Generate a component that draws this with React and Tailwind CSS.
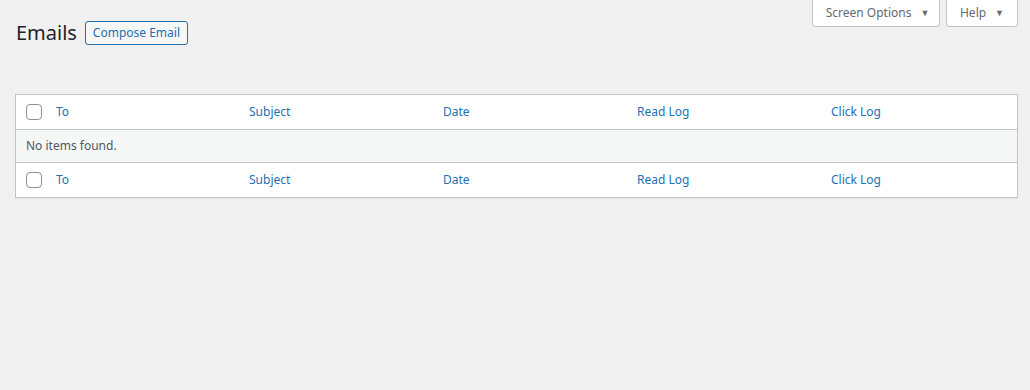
export default function App() {
    const columns = ['Subject', 'Date', 'Read Log', 'Click Log'];

    const headerRow = (key) => (
        <div key={key} className="flex h-[34px] items-center bg-white">
            <div className="flex w-[32px] shrink-0 justify-end pr-[6px]">
                <span className="block h-[16px] w-[16px] rounded-[4px] border border-[#8c8f94] bg-white" />
            </div>
            <div className="w-[194px] shrink-0 pl-[8px] text-[12px] text-[#2271b1]">To</div>
            {columns.map((c) => (
                <div key={c} className="w-[194px] shrink-0 pl-[7px] text-[12px] text-[#2271b1]">{c}</div>
            ))}
        </div>
    );

    return (
        <div
            className="min-h-[390px] w-full bg-[#f0f0f1] text-[#3c434a]"
            style={{ fontFamily: '"Noto Sans", "Open Sans", sans-serif' }}
        >
            {/* Screen meta tabs */}
            <div className="flex justify-end gap-[6px] pr-[12px]">
                <button className="flex h-[27px] w-[128px] items-center justify-center gap-[9px] rounded-b-[4px] border border-t-0 border-[#c3c4c7] bg-white pl-[3px] text-[12px] text-[#646970]">
                    Screen Options <span className="text-[9px]">▼</span>
                </button>
                <button className="flex h-[27px] w-[72px] items-center justify-center gap-[9px] rounded-b-[4px] border border-t-0 border-[#c3c4c7] bg-white text-[12px] text-[#646970]">
                    Help <span className="text-[9px]">▼</span>
                </button>
            </div>

            <div className="px-[15px] pr-[12px]">
                <div className="-mt-[9px] flex items-center gap-[8px]">
                    <h1 className="pl-[1px] text-[20px] font-normal leading-[29px] text-[#1d2327]">Emails</h1>
                    <button className="h-[24px] w-[103px] rounded-[3px] border border-[#2271b1] bg-[#f6f7f7] text-[12px] leading-[22px] text-[#2271b1]">
                        Compose Email
                    </button>
                </div>

                <div className="mt-[47px] w-[1003px] border border-[#c3c4c7] shadow-[0_1px_1px_rgba(0,0,0,0.04)]">
                    {headerRow('head')}
                    <div className="flex h-[34px] items-center border-y border-[#c3c4c7] bg-[#f6f7f7] pl-[10px] text-[12px] text-[#50575e]">
                        No items found.
                    </div>
                    {headerRow('foot')}
                </div>
            </div>
        </div>
    );
}
